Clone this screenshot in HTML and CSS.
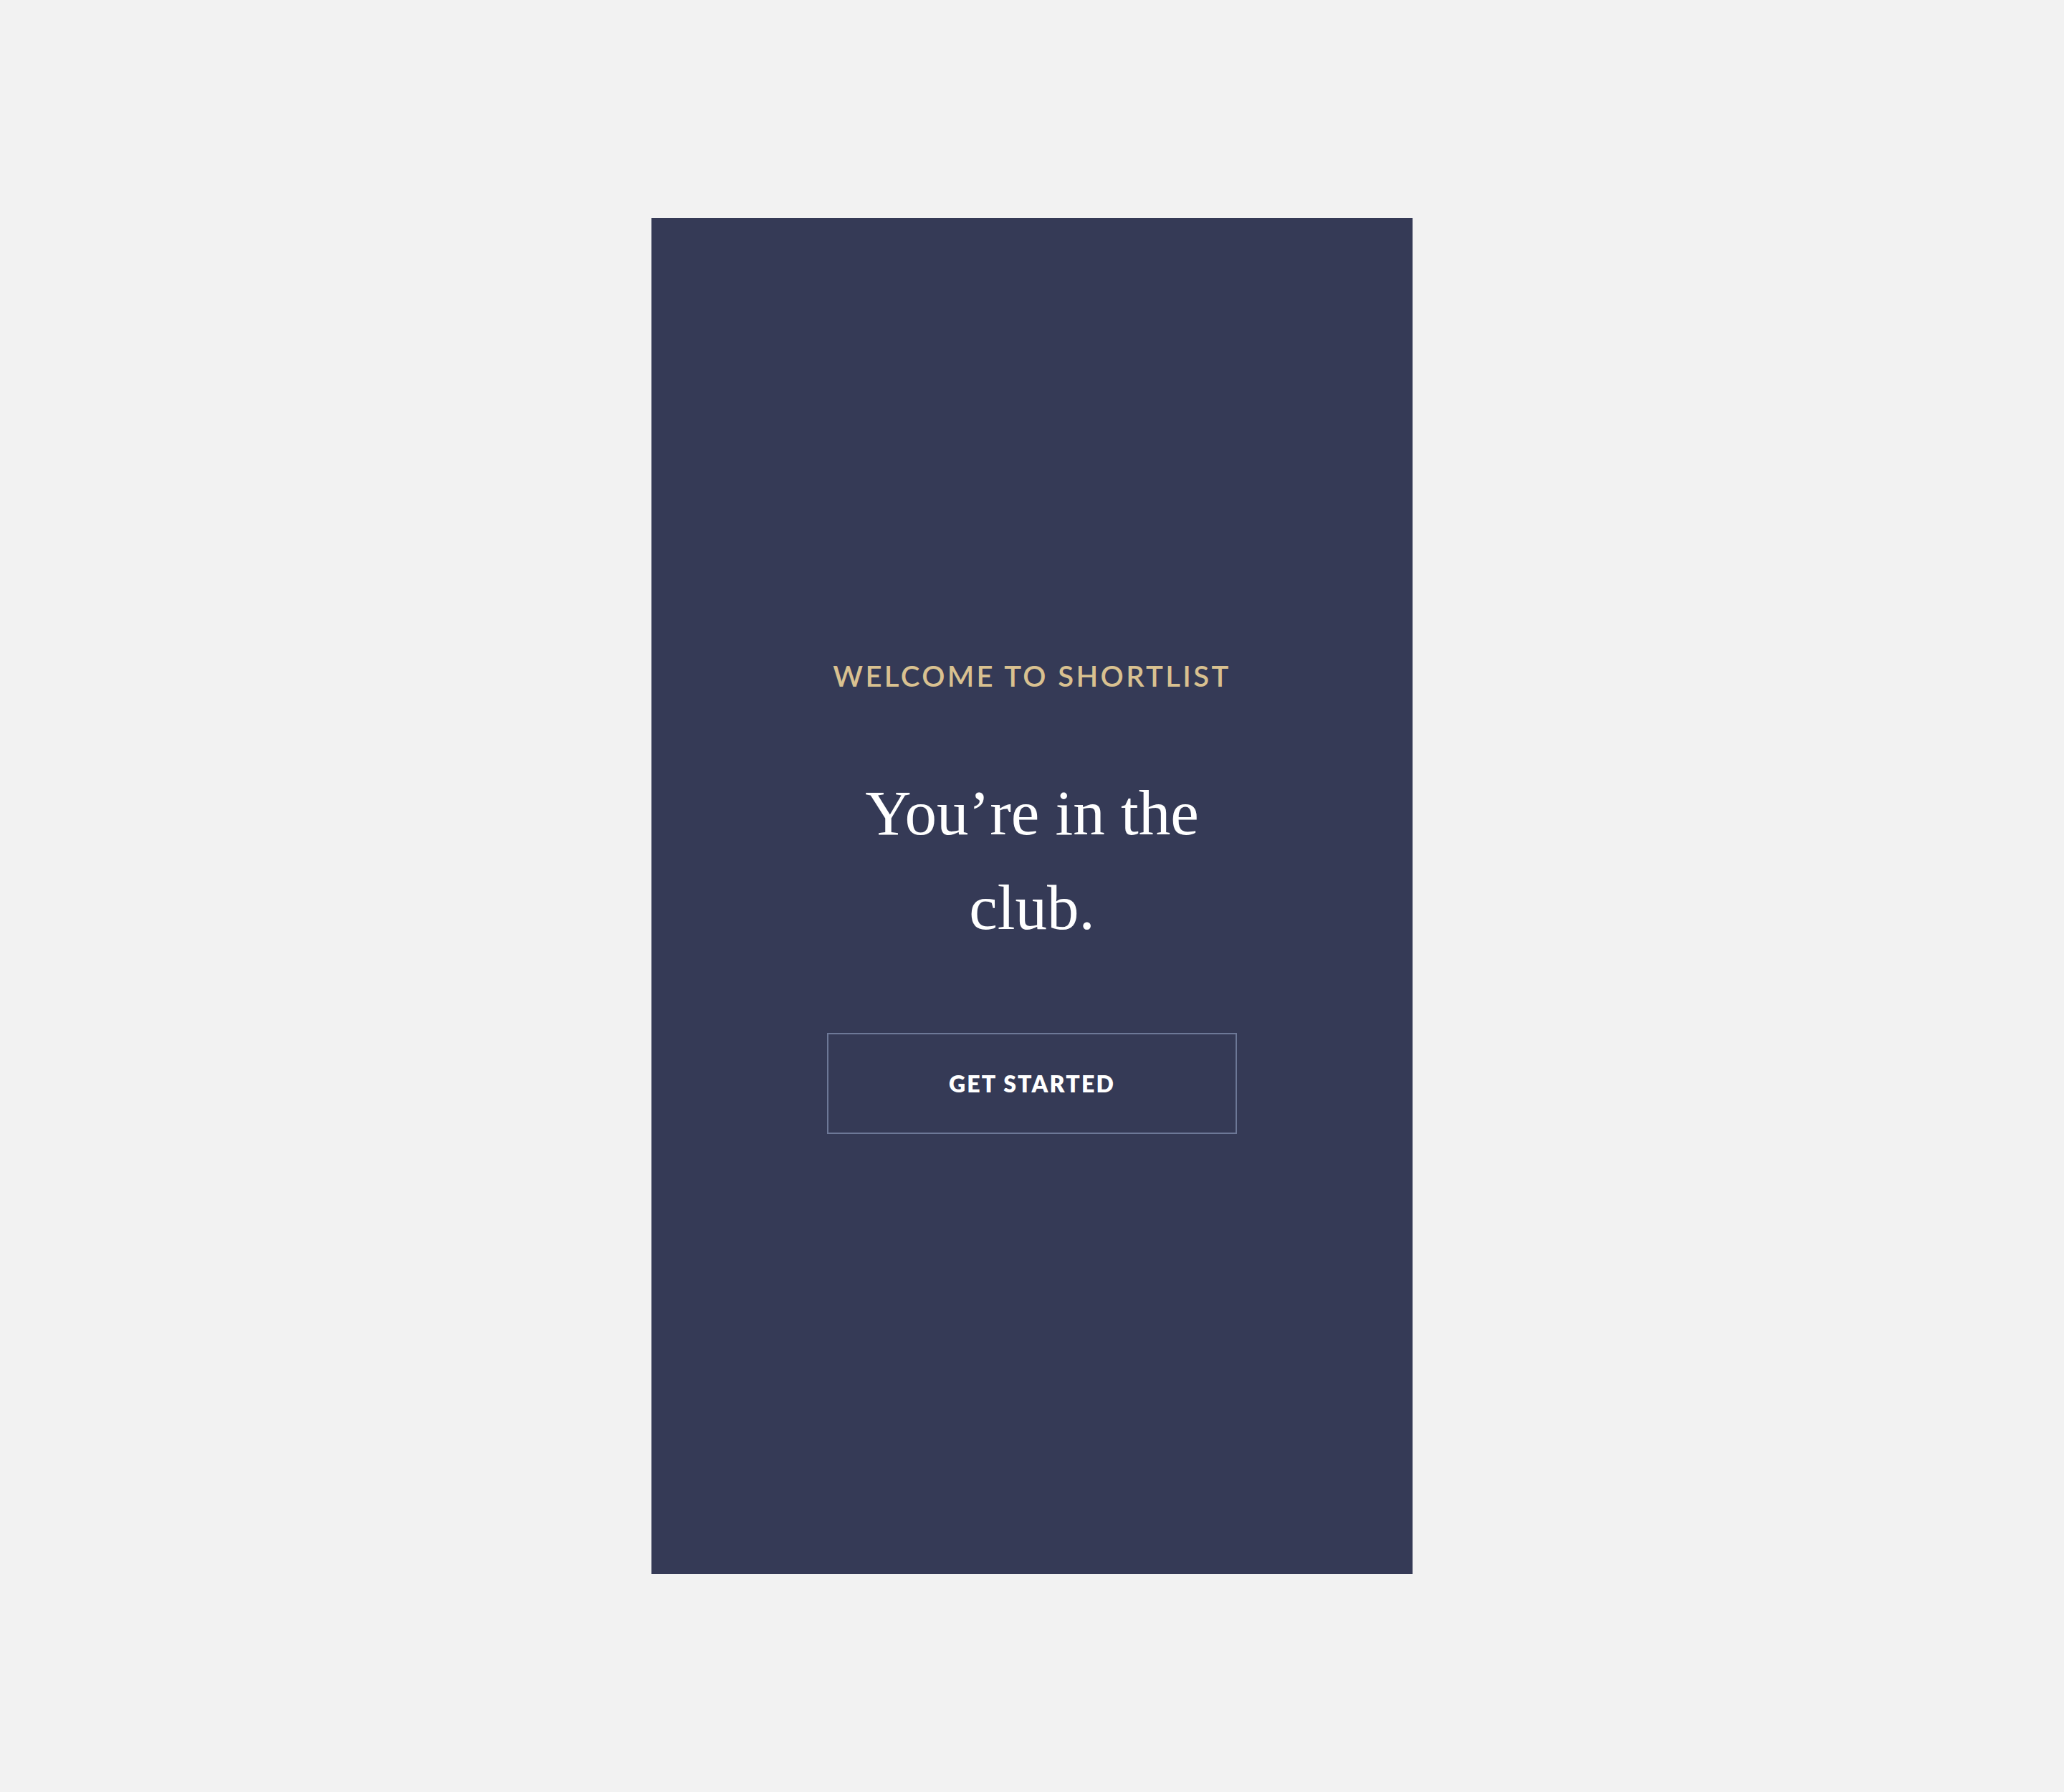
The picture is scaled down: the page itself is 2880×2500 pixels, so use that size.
FILE: index.html
```html
<!DOCTYPE html>
<html lang="en">
<head>
<meta charset="utf-8">
<title>Welcome to Shortlist</title>
<link rel="stylesheet" href="styles.css">
</head>
<body>
<main class="panel">
  <p class="eyebrow">WELCOME TO SHORTLIST</p>
  <h1 class="headline">You’re in the club.</h1>
  <button class="cta" type="button">GET STARTED</button>
</main>
</body>
</html>
```
FILE: styles.css
```css
html, body {
  margin: 0;
  padding: 0;
}
body {
  background: #f2f2f2;
  min-height: 2500px;
  padding-top: 304px;
  box-sizing: border-box;
}
.panel {
  width: 1062px;
  height: 1892px;
  margin: 0 auto;
  background: #353a56;
  display: flex;
  flex-direction: column;
  align-items: center;
  padding-top: 615px;
  box-sizing: border-box;
}
.eyebrow {
  margin: 0;
  font-family: Lato, "Noto Sans", sans-serif;
  font-weight: 600;
  font-size: 40px;
  line-height: 48px;
  letter-spacing: 3.4px;
  color: #d9c190;
  text-align: center;
}
.headline {
  margin: 101px 0 0;
  max-width: 600px;
  font-family: "Liberation Serif", serif;
  font-weight: 400;
  font-size: 89px;
  line-height: 132px;
  color: #ffffff;
  text-align: center;
}
.cta {
  margin-top: 109px;
  width: 572px;
  height: 141px;
  border: 2px solid #6d7897;
  background: transparent;
  color: #ffffff;
  font-family: Lato, "Noto Sans", sans-serif;
  font-weight: 800;
  font-size: 32px;
  letter-spacing: 2.2px;
  padding: 0;
  cursor: pointer;
}
```
